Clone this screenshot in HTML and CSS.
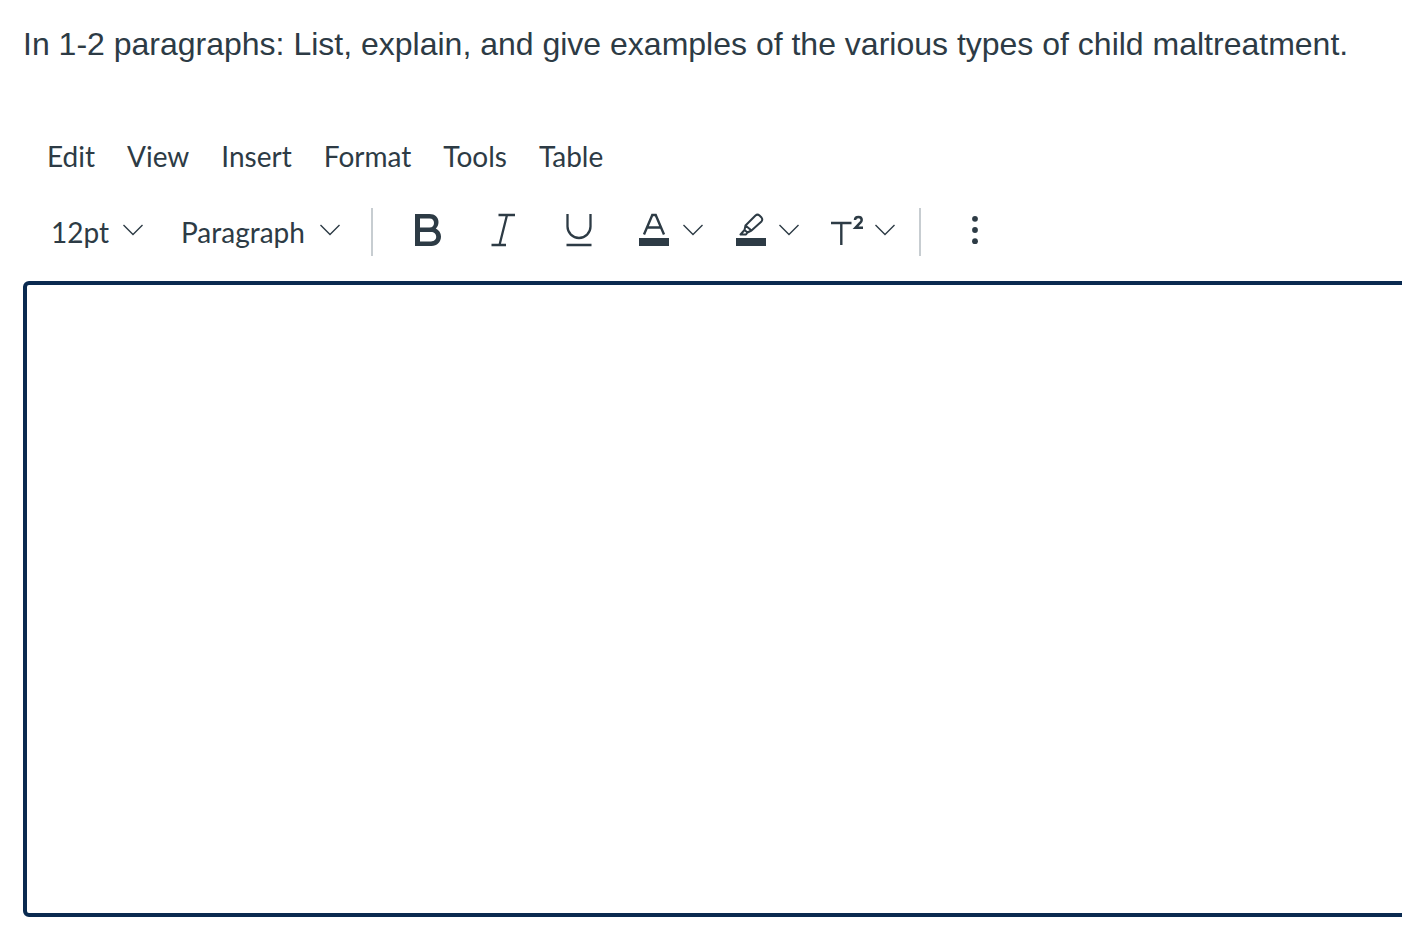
FILE: index.html
```html
<!DOCTYPE html>
<html lang="en">
<head>
    <meta charset="UTF-8">
    <title>Essay Question</title>
    <link rel="stylesheet" href="styles.css">
</head>
<body>
    <p class="question" id="question">In 1-2 paragraphs: List, explain, and give examples of the various types of child maltreatment.</p>

    <div class="editor">
        <div class="menubar" role="menubar">
            <button type="button" role="menuitem">Edit</button>
            <button type="button" role="menuitem">View</button>
            <button type="button" role="menuitem">Insert</button>
            <button type="button" role="menuitem">Format</button>
            <button type="button" role="menuitem">Tools</button>
            <button type="button" role="menuitem">Table</button>
        </div>

        <div class="toolbar" role="toolbar" aria-label="Formatting">
            <div class="group selects">
                <select aria-label="Font size">
                    <option>8pt</option>
                    <option selected>12pt</option>
                    <option>14pt</option>
                    <option>18pt</option>
                </select>
                <select aria-label="Block style">
                    <option selected>Paragraph</option>
                    <option>Heading 2</option>
                    <option>Heading 3</option>
                </select>
            </div>

            <div class="group styles">
                <button type="button" class="tool" aria-label="Bold">
                    <svg width="32" height="48" viewBox="0 0 32 48">
                        <path d="M4 6H18.500C24 6 27.500 9.500 27.500 14C27.500 17 26.500 19 24.800 20.500C28 22 30 25 30 28.500C30 34 26 38 20.500 38H4zM9 10.500V19.500H18.500C21.500 19.500 23 17.500 23 15C23 12.500 21.500 10.500 18.500 10.500zM9 24V33.500H20C23 33.500 25.200 31.500 25.200 28.800C25.200 26 23 24 20 24z" fill="currentColor" fill-rule="evenodd"/>
                    </svg>
                </button>
                <button type="button" class="tool" aria-label="Italic">
                    <svg width="32" height="48" viewBox="0 0 32 48">
                        <path d="M11.500 7H28M4.500 37H19M20 7L12.500 37" fill="none" stroke="currentColor" stroke-width="2.300"/>
                    </svg>
                </button>
                <button type="button" class="tool" aria-label="Underline">
                    <svg width="32" height="48" viewBox="0 0 32 48">
                        <path d="M4.500 6V18.500a11.500 11.500 0 0 0 23 0V6M3.500 37H28.500" fill="none" stroke="currentColor" stroke-width="2.300"/>
                    </svg>
                </button>
            </div>

            <div class="group colors">
                <button type="button" class="tool split" aria-label="Text color">
                    <svg width="32" height="48" viewBox="0 0 32 48">
                        <path d="M5 26.500L13.300 7H16.700L25 26.500M8.500 19.500H21.500" fill="none" stroke="currentColor" stroke-width="2.400"/>
                        <path d="M0 30H30V38H0z" fill="currentColor"/>
                    </svg>
                    <svg class="chevron" width="20" height="12" viewBox="0 0 20 12">
                        <path d="M.5 1L10 10.500L19.500 1"/>
                    </svg>
                </button>
                <button type="button" class="tool split" aria-label="Background color">
                    <svg width="32" height="48" viewBox="0 0 32 48">
                        <path d="M10.500 17.500L20.500 7.500Q22.500 5.800 24.500 7.500L26.500 9.500Q28 11.500 26.500 13.500L16.500 22.500zM10.500 17.500L9.500 22L5.500 26.500H11L12.500 24.500L16.500 22.500M9.500 22L12.500 24.500" fill="none" stroke="currentColor" stroke-width="2" stroke-linejoin="round"/>
                        <path d="M1 30H31V38H1z" fill="currentColor"/>
                    </svg>
                    <svg class="chevron" width="20" height="12" viewBox="0 0 20 12">
                        <path d="M.5 1L10 10.500L19.500 1"/>
                    </svg>
                </button>
                <button type="button" class="tool split" aria-label="Superscript and subscript">
                    <svg width="32" height="48" viewBox="0 0 32 48">
                        <path d="M0 15H20.500M10.300 15V37" fill="none" stroke="currentColor" stroke-width="2.400"/>
                        <path d="M24 12Q24 9 27.500 9Q30.700 9 30.700 12Q30.700 13.500 29 15L24.500 19.800H32" fill="none" stroke="currentColor" stroke-width="2.500"/>
                    </svg>
                    <svg class="chevron" width="20" height="12" viewBox="0 0 20 12">
                        <path d="M.5 1L10 10.500L19.500 1"/>
                    </svg>
                </button>
            </div>

            <div class="group more">
                <button type="button" class="tool" aria-label="More">
                    <svg width="32" height="48" viewBox="0 0 32 48">
                        <g fill="currentColor">
                            <circle cx="16" cy="10.800" r="2.900"/>
                            <circle cx="16" cy="22" r="2.900"/>
                            <circle cx="16" cy="33.200" r="2.900"/>
                        </g>
                    </svg>
                </button>
            </div>
        </div>

        <textarea class="answer" aria-labelledby="question"></textarea>
    </div>
</body>
</html>
```
FILE: styles.css
```css
* {
    box-sizing: border-box;
}
body {
    display: flex;
    flex-direction: column;
    min-height: 100vh;
    margin: 0;
    padding: 24px 0 24px 23px;
    background: #fff;
    color: #2d3b45;
    font-family: Lato, sans-serif;
    overflow-x: hidden;
}
.question {
    margin: 0 0 68px;
    font-family: "Liberation Sans", Arial, sans-serif;
    font-size: 32px;
    line-height: 40px;
}
.editor {
    display: flex;
    flex: 1;
    flex-direction: column;
}
button, select {
    margin: 0;
    border: none;
    background: none;
    color: inherit;
    font-family: inherit;
    font-size: 28px;
    cursor: pointer;
}
.menubar {
    display: flex;
    padding-left: 8px;
}
.menubar button {
    padding: 0 16px;
    line-height: 48px;
}
.toolbar {
    display: flex;
    height: 48px;
    margin: 28px 0 25px;
}
.group {
    display: flex;
}
.group + .group {
    padding-left: 16px;
}
.selects {
    gap: 7px;
    padding: 0 16px 0 12px;
    border-right: 2px solid #c7cdd1;
}
select {
    appearance: none;
    height: 48px;
    padding: 0 48px 0 16px;
    background: url("data:image/svg+xml,%3Csvg xmlns='http://www.w3.org/2000/svg' width='20' height='12'%3E%3Cpath d='M.5 1L10 10.500L19.500 1' fill='none' stroke='%232d3b45' stroke-width='1.400'/%3E%3C/svg%3E") no-repeat right 15px top 16px;
}
.tool {
    display: flex;
    align-items: center;
    padding: 0 22px;
}
.tool svg {
    flex: none;
}
.split {
    gap: 12px;
    padding: 0 16px;
}
.chevron {
    margin-bottom: 4px;
    fill: none;
    stroke: currentColor;
    stroke-width: 1.4px;
}
.group.colors {
    padding: 0 8px 0 6px;
    border-right: 2px solid #c7cdd1;
}
.answer {
    display: block;
    flex: 1;
    width: calc(100% + 8px);
    padding: 16px;
    border: 4px solid #0a2a50;
    border-radius: 6px;
    outline: none;
    color: inherit;
    font-family: inherit;
    font-size: 28px;
    resize: none;
}
```
